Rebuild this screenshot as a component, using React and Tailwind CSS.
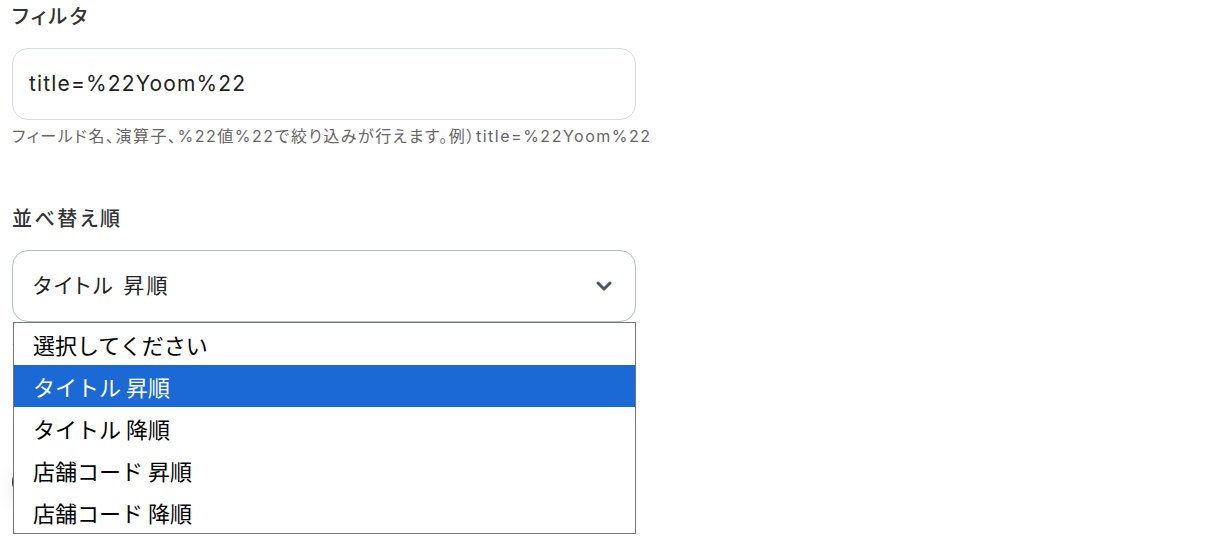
import React from "react"

const options = ["選択してください", "タイトル 昇順", "タイトル 降順", "店舗コード 昇順", "店舗コード 降順"]

const Chevron = () => (
  <svg width="18" height="12" viewBox="0 0 18 12" fill="none">
    <path d="M3 3l6 6 6-6" stroke="#4b5563" strokeWidth="3" strokeLinecap="round" strokeLinejoin="round" />
  </svg>
)

export default function App() {
  const selected = 1
  return (
    <div className="min-h-[538px] bg-white px-3 pt-[4px] font-['Inter','Noto_Sans_CJK_JP',sans-serif] [font-feature-settings:'palt']">
      <div className="w-[624px]">
        <div className="text-[20px] leading-[26px] font-medium tracking-[0.12em] text-[#333]">フィルタ</div>
        <div className="mt-[18px] flex h-[72px] items-center rounded-[16px] border border-[#d6dce4] px-[16px] text-[21px] tracking-[0.055em] text-[#222]">
          title=%22Yoom%22
        </div>
        <div className="mt-[6px] whitespace-nowrap text-[16px] leading-[20px] tracking-[0.095em] text-[#666]">
          フィールド名、演算子、%22値%22で絞り込みが行えます。例）title=%22Yoom%22
        </div>

        <div className="mt-[60px] text-[20px] leading-[26px] font-medium tracking-[0.12em] text-[#333]">並べ替え順</div>
        <div className="relative mt-[18px]">
          <div className="flex h-[72px] items-center justify-between rounded-[16px] border border-[#b3bcc8] pl-[20px] pr-[22px] text-[21px] tracking-[0.11em] text-[#222]">
            <span>タイトル 昇順</span>
            <Chevron />
          </div>
          <div className="mt-[6px] text-[16px] leading-[20px] tracking-[0.1em] text-[#666]">並べ替えの順序</div>
          <div className="mt-[120px] h-[28px] w-[140px] rounded-full bg-[#333] shadow-[0_6px_20px_rgba(0,0,0,0.12)]" />

          <div className="absolute left-[1px] right-0 top-[72px] border border-[#767676] bg-white font-['Noto_Sans_CJK_JP',sans-serif] [font-feature-settings:normal]">
            {options.map((o, i) => (
              <div
                key={o}
                className={`flex h-[42px] items-center pl-[19px] text-[22px] ${
                  i === selected ? "bg-[#1a69d4] text-white" : "text-black"
                }`}
              >
                {o}
              </div>
            ))}
          </div>
        </div>
      </div>
    </div>
  )
}
